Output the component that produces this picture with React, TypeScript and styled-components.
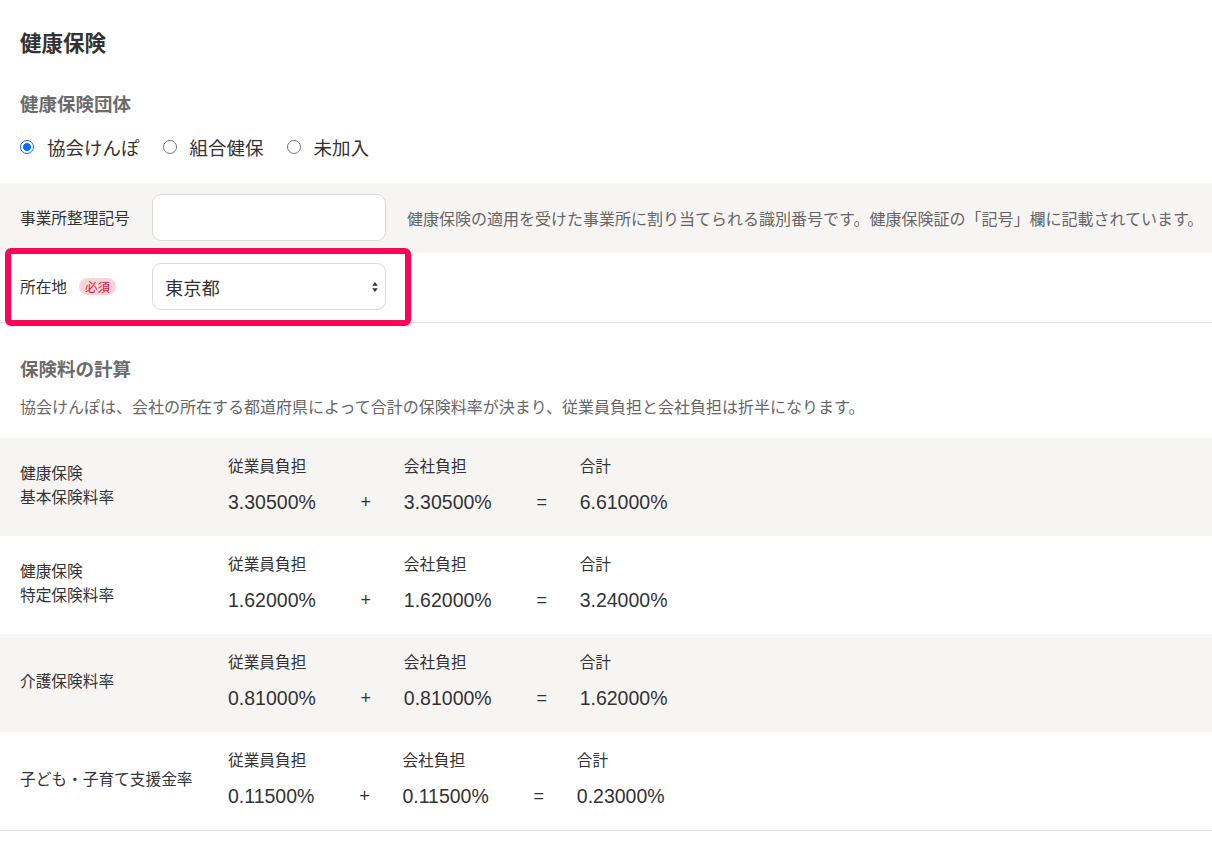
import React from "react";
import styled, { createGlobalStyle } from "styled-components";

const GlobalStyle = createGlobalStyle`
  html, body {
    margin: 0;
    padding: 0;
    background: #ffffff;
  }
  body {
    font-family: "Noto Sans CJK JP", "Liberation Sans", sans-serif;
    color: #333333;
  }
  * { box-sizing: border-box; }
`;

const GRAY = "#f6f5f3";
const TEXT = "#333333";
const SUB = "#6b6b6b";

const Page = styled.div`
  width: 1212px;
  padding-top: 27px;
  padding-bottom: 14px;
`;

const Title = styled.h2`
  margin: 0;
  padding: 0 20px;
  font-size: 21.5px;
  line-height: 30px;
  font-weight: 700;
  color: ${TEXT};
`;

const SubTitle = styled.h3<{ $mt: number }>`
  margin: ${(p) => p.$mt}px 0 0;
  padding: 0 20px;
  font-size: 18.5px;
  line-height: 26px;
  font-weight: 700;
  color: ${SUB};
`;

const RadioGroup = styled.div`
  display: flex;
  align-items: center;
  gap: 23px;
  margin-top: 18px;
  padding: 0 20px;
  height: 26px;
`;

const RadioItem = styled.label`
  display: flex;
  align-items: center;
  gap: 13px;
  font-size: 18.5px;
  line-height: 26px;
  color: ${TEXT};
`;

const RadioCircle = styled.span<{ $checked?: boolean }>`
  display: inline-block;
  width: 14px;
  height: 14px;
  border-radius: 50%;
  flex: none;
  border: ${(p) => (p.$checked ? "1.5px solid #0b6cf4" : "1px solid #767676")};
  background: ${(p) =>
    p.$checked
      ? "radial-gradient(circle, #0b6cf4 0 3.6px, #ffffff 4.2px)"
      : "#ffffff"};
`;

const FormRow = styled.div<{ $gray?: boolean; $bordered?: boolean }>`
  position: relative;
  display: flex;
  align-items: center;
  padding: ${(p) => (p.$bordered ? "10px 20px 12px" : "11px 20px 12px")};
  background: ${(p) => (p.$gray ? GRAY : "#ffffff")};
  border-bottom: ${(p) => (p.$bordered ? "1px solid #e4e4e4" : "none")};
`;

const FieldLabel = styled.div`
  display: flex;
  align-items: center;
  gap: 12px;
  width: 132px;
  flex: none;
  font-size: 15.7px;
  line-height: 24px;
  color: ${TEXT};
`;

const Badge = styled.span`
  display: inline-flex;
  align-items: center;
  height: 17px;
  padding: 0 6px;
  border-radius: 9px;
  background: #fbd4db;
  color: #c91c44;
  font-size: 12.5px;
  line-height: 17px;
`;

const TextInput = styled.input`
  width: 234px;
  height: 47px;
  flex: none;
  border: 1px solid #d9d9d9;
  border-radius: 9px;
  background: #ffffff;
  padding: 0 12px;
  font-size: 16px;
  outline: none;
`;

const Help = styled.div`
  margin-left: 21px;
  font-size: 16px;
  line-height: 24px;
  color: #666666;
  white-space: nowrap;
`;

const SelectWrap = styled.div`
  position: relative;
  width: 234px;
  height: 47px;
  flex: none;
`;

const Select = styled.select`
  appearance: none;
  -webkit-appearance: none;
  width: 100%;
  height: 100%;
  border: 1px solid #d9d9d9;
  border-radius: 9px;
  background: #ffffff;
  padding: 0 12px;
  font-family: "Noto Sans CJK JP", sans-serif;
  font-size: 18.3px;
  color: ${TEXT};
  outline: none;
`;

const SelectArrow = styled.svg`
  position: absolute;
  right: 8px;
  top: 50%;
  transform: translateY(-50%);
  pointer-events: none;
`;

const Highlight = styled.div`
  position: absolute;
  left: 5px;
  top: -5px;
  width: 406px;
  height: 78px;
  border: 6px solid #fe0358;
  border-radius: 6px;
  pointer-events: none;
`;

const Description = styled.p`
  margin: 13px 0 0;
  padding: 0 20px;
  font-size: 16px;
  line-height: 24px;
  color: #666666;
`;

const RateTable = styled.div`
  margin-top: 20px;
`;

const RateRow = styled.div<{ $gray?: boolean; $last?: boolean }>`
  display: flex;
  align-items: center;
  padding: 18px 20px 22px;
  background: ${(p) => (p.$gray ? GRAY : "#ffffff")};
  border-bottom: ${(p) => (p.$last ? "1px solid #e4e4e4" : "none")};
`;

const RateLabel = styled.div`
  width: 208px;
  flex: none;
  font-size: 15.7px;
  line-height: 24px;
  color: ${TEXT};
`;

const RateGrid = styled.div`
  display: grid;
  grid-template-columns: auto 88px auto 88px auto;
  row-gap: 14px;
  align-items: center;
`;

const ColHead = styled.div`
  font-size: 15.7px;
  line-height: 20px;
  color: ${TEXT};
  white-space: nowrap;
`;

const Value = styled.div`
  font-family: "Liberation Sans", "Noto Sans CJK JP", sans-serif;
  font-size: 19.5px;
  line-height: 24px;
  color: ${TEXT};
  white-space: nowrap;
`;

const Operator = styled(Value)`
  padding-left: 12px;
  text-align: center;
  font-size: 18px;
`;

type Rate = {
  label: string[];
  employee: string;
  company: string;
  total: string;
};

const rates: Rate[] = [
  { label: ["健康保険", "基本保険料率"], employee: "3.30500%", company: "3.30500%", total: "6.61000%" },
  { label: ["健康保険", "特定保険料率"], employee: "1.62000%", company: "1.62000%", total: "3.24000%" },
  { label: ["介護保険料率"], employee: "0.81000%", company: "0.81000%", total: "1.62000%" },
  { label: ["子ども・子育て支援金率"], employee: "0.11500%", company: "0.11500%", total: "0.23000%" },
];

export default function App() {
  return (
    <>
      <GlobalStyle />
      <Page>
        <Title>健康保険</Title>
        <SubTitle $mt={33}>健康保険団体</SubTitle>
        <RadioGroup>
          <RadioItem>
            <RadioCircle $checked />
            協会けんぽ
          </RadioItem>
          <RadioItem>
            <RadioCircle />
            組合健保
          </RadioItem>
          <RadioItem>
            <RadioCircle />
            未加入
          </RadioItem>
        </RadioGroup>

        <div style={{ marginTop: 23 }}>
          <FormRow $gray>
            <FieldLabel>事業所整理記号</FieldLabel>
            <TextInput type="text" />
            <Help>
              健康保険の適用を受けた事業所に割り当てられる識別番号です。健康保険証の「記号」欄に記載されています。
            </Help>
          </FormRow>
          <FormRow $bordered>
            <FieldLabel>
              所在地
              <Badge>必須</Badge>
            </FieldLabel>
            <SelectWrap>
              <Select defaultValue="tokyo">
                <option value="tokyo">東京都</option>
              </Select>
              <SelectArrow width="6" height="11" viewBox="0 0 6 11">
                <path d="M3 0.5 L5.8 4.3 H0.2 Z" fill="#333" />
                <path d="M3 10.5 L5.8 6.7 H0.2 Z" fill="#333" />
              </SelectArrow>
            </SelectWrap>
            <Highlight />
          </FormRow>
        </div>

        <SubTitle $mt={32}>保険料の計算</SubTitle>
        <Description>
          協会けんぽは、会社の所在する都道府県によって合計の保険料率が決まり、従業員負担と会社負担は折半になります。
        </Description>

        <RateTable>
          {rates.map((r, i) => (
            <RateRow key={i} $gray={i % 2 === 0} $last={i === rates.length - 1}>
              <RateLabel>
                {r.label.map((l, j) => (
                  <div key={j}>{l}</div>
                ))}
              </RateLabel>
              <RateGrid>
                <ColHead>従業員負担</ColHead>
                <span />
                <ColHead>会社負担</ColHead>
                <span />
                <ColHead>合計</ColHead>
                <Value>{r.employee}</Value>
                <Operator>+</Operator>
                <Value>{r.company}</Value>
                <Operator>=</Operator>
                <Value>{r.total}</Value>
              </RateGrid>
            </RateRow>
          ))}
        </RateTable>
      </Page>
    </>
  );
}
